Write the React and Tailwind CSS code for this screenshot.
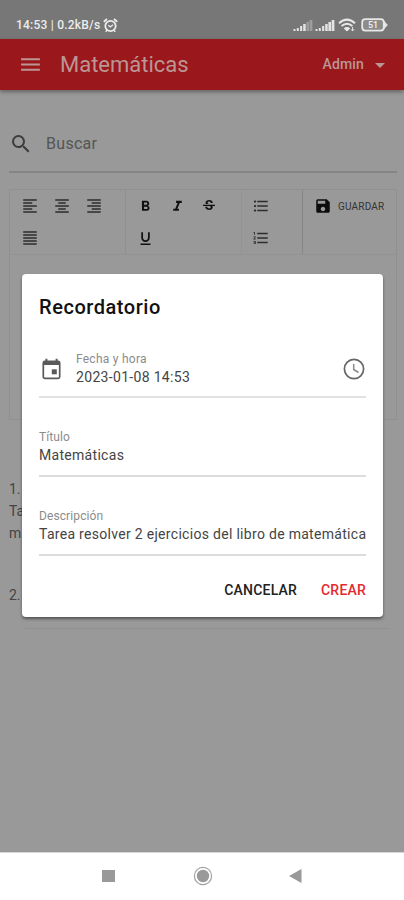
import {
  MdMenu, MdSearch, MdArrowDropDown, MdFormatAlignLeft, MdFormatAlignCenter,
  MdFormatAlignRight, MdFormatAlignJustify, MdFormatBold, MdFormatItalic,
  MdStrikethroughS, MdFormatUnderlined, MdFormatListBulleted,
  MdFormatListNumbered, MdSave,
} from "react-icons/md";

function Signal({ weak }) {
  return (
    <svg width="20" height="13" viewBox="0 0 20 13" fill="#e4e4e4">
      <rect x="0.5" y="10" width="2" height="2" />
      <rect x="3.8" y="9" width="2" height="3" />
      <rect x="7.1" y="7" width="2.1" height="5" />
      <rect x="10.2" y="5" width="2.5" height="7" />
      <rect x="13.4" y="3" width="2.6" height="9" opacity={weak ? 0.35 : 1} />
      <rect x="16.6" y="1" width="2.8" height="11" opacity={weak ? 0.35 : 1} />
    </svg>
  );
}

function StatusBar() {
  return (
    <div className="flex h-[39px] items-start justify-between bg-[#777777] pl-4 pr-4 pt-[17px] text-[#ececec]">
      <div className="flex h-4 items-center">
        <span className="text-[12px] font-medium leading-4 tracking-[0.22px] whitespace-nowrap">14:53 | 0.2kB/s</span>
        <svg className="ml-[3px]" width="15" height="15" viewBox="0 0 15 15" fill="none" stroke="#ececec" strokeWidth="1.8">
          <circle cx="7.5" cy="8" r="5.2" />
          <path d="M0.8 3.8 4 1M14.2 3.8 11 1" />
          <path d="M5.3 7.2 7.3 9l2.8-2.2" strokeWidth="1.3" />
          <path d="M4 12 2.8 13.8M11 12l1.2 1.8" strokeWidth="1.4" />
        </svg>
      </div>
      <div className="flex h-4 items-center">
        <Signal weak />
        <div className="ml-[2px]">
          <Signal />
        </div>
        <svg className="ml-[3px]" width="18" height="14" viewBox="0 0 18 14" fill="none" stroke="#e8e8e8" strokeWidth="2">
          <path d="M1 5.2Q9-2 17 5.2" />
          <path d="M3.6 8Q9 3.4 14.4 8" />
          <path d="M6.2 10.4Q9 8.2 11.8 10.4L9 13z" fill="#e8e8e8" strokeWidth="1" />
          <path d="M14.6 9v4M13.2 11.4 14.6 13l1.4-1.6" strokeWidth="1" />
        </svg>
        <svg className="ml-[5px]" width="27" height="14" viewBox="0 0 27 14">
          <rect x="1.2" y="1.2" width="21.6" height="11.4" rx="3" fill="#8c8c8c" stroke="#e6e6e6" strokeWidth="1.8" />
          <path d="M23 2.8 26.8 7 23 11.2z" fill="#e6e6e6" />
          <text x="12" y="10.2" textAnchor="middle" fill="#f0f0f0" className="text-[9px] font-medium">51</text>
        </svg>
      </div>
    </div>
  );
}

function Tool({ icon: Icon, size = 18 }) {
  return (
    <span className="flex h-8 w-8 items-center justify-center">
      <Icon size={size} />
    </span>
  );
}

function Toolbar() {
  return (
    <div className="flex h-[65px] border-b border-[#929292] text-[#2c2c2c]">
      <div className="flex w-[116px] flex-wrap content-start border-r border-[#909090] pl-[3.5px]">
        <Tool icon={MdFormatAlignLeft} />
        <Tool icon={MdFormatAlignCenter} />
        <Tool icon={MdFormatAlignRight} />
        <Tool icon={MdFormatAlignJustify} />
      </div>
      <div className="flex w-[116px] flex-wrap content-start border-r border-[#939393] pl-[3px] text-[#111111]">
        <Tool icon={MdFormatBold} size={17} />
        <Tool icon={MdFormatItalic} size={17} />
        <Tool icon={MdStrikethroughS} size={16} />
        <Tool icon={MdFormatUnderlined} size={17} />
      </div>
      <div className="flex w-[61px] flex-col items-start border-r border-[#868686] pl-[3px]">
        <Tool icon={MdFormatListBulleted} />
        <Tool icon={MdFormatListNumbered} />
      </div>
      <div className="flex h-8 items-center pl-[11px]">
        <MdSave size={18} className="text-[#0c0c0c]" />
        <span className="ml-1.5 text-[10px] tracking-[0.2px] text-[#333333]">GUARDAR</span>
      </div>
    </div>
  );
}

function Field({ label, value }) {
  return (
    <div className="mt-[31px] h-12 border-b-2 border-[#dcdcdc]">
      <div className="text-[12px] leading-4 tracking-[0.1px] text-[#8b8b8b]">{label}</div>
      <div className="text-[14px] leading-5 tracking-[0.3px] whitespace-nowrap text-[#444444]">{value}</div>
    </div>
  );
}

function ReminderDialog() {
  return (
    <div className="absolute left-[22px] top-[274px] h-[343px] w-[361px] rounded-[4px] bg-white px-[17px] pt-[19px] shadow-[0_2px_3px_rgba(0,0,0,0.45)]">
      <h2 className="text-[20px] font-medium leading-7 tracking-[0.55px] text-[#111111]">Recordatorio</h2>
      <div className="mt-[30px] flex h-[47px] items-start border-b-2 border-[#e2e2e2]">
        <svg className="ml-[3px] mt-[7px]" width="19" height="22" viewBox="0 0 19 22" fill="#5a5a5a">
          <rect x="1.3" y="3.3" width="16.4" height="17" rx="1.6" fill="none" stroke="#5a5a5a" strokeWidth="1.7" />
          <path d="M1 3h17v4H1zM3.4 0.8h2V4h-2zM13.6 0.8h2V4h-2z" />
          <rect x="9.8" y="11.3" width="5" height="5" />
        </svg>
        <div className="ml-[15px] flex-1">
          <div className="text-[12px] leading-4 tracking-[0.25px] text-[#8b8b8b]">Fecha y hora</div>
          <div className="text-[14px] leading-5 tracking-[0.32px] text-[#444444]">2023-01-08 14:53</div>
        </div>
        <svg className="mr-[1px] mt-[7px]" width="22" height="22" viewBox="0 0 22 22" fill="none" stroke="#666666" strokeWidth="1.7">
          <circle cx="11" cy="11" r="9.6" />
          <path d="M10.7 6v5.5l4.8 3" stroke="#888888" strokeWidth="1.5" />
        </svg>
      </div>
      <Field label="Título" value="Matemáticas" />
      <Field label="Descripción" value="Tarea resolver 2 ejercicios del libro de matemática" />
      <div className="mt-6 flex justify-end gap-6 text-[14px] font-medium leading-5 tracking-[0.2px]">
        <button className="text-[#222222]">CANCELAR</button>
        <button className="text-[#e52a2e]">CREAR</button>
      </div>
    </div>
  );
}

export default function App() {
  return (
    <div className="relative flex h-[900px] w-[404px] flex-col overflow-hidden bg-[#999999] font-['Roboto',sans-serif]">
      <StatusBar />
      <header className="flex h-[51px] shrink-0 items-center bg-[#9a171b] pl-[18px] pr-3 text-[#bb9694] shadow-[0_2px_4px_rgba(0,0,0,0.35)]">
        <MdMenu size={25} />
        <h1 className="ml-[17px] text-[22px] leading-7">Matemáticas</h1>
        <span className="ml-auto text-[14px] font-medium tracking-[0.15px]">Admin</span>
        <MdArrowDropDown size={24} className="ml-1" />
      </header>
      <main className="flex-1 pl-[9px] pr-[7px] pt-[30px]">
        <div className="flex h-[53px] items-start border-b-2 border-[#858585]">
          <MdSearch size={24} className="mt-3 text-[#3c3c3c]" />
          <span className="ml-[13px] mt-3 text-[16px] leading-6 tracking-[0.3px] text-[#555555]">Buscar</span>
        </div>
        <div className="mt-4 h-[231px] border border-[#909090]">
          <Toolbar />
        </div>
        <div className="pt-[58px] text-[14px] leading-[22px] text-[#444444]">
          <p>1.</p>
          <p>Ta</p>
          <p>m</p>
          <p className="mt-10">2.</p>
        </div>
        <div className="ml-4 mr-2 mt-[22px] border-b border-[#909090]" />
      </main>
      <nav className="flex h-12 shrink-0 items-center border-t border-[#d8d8d8] bg-white pb-px pl-[102px]">
        <span className="h-3 w-[13px] bg-[#999999]" />
        <svg className="ml-[78px]" width="20" height="20" viewBox="0 0 20 20">
          <circle cx="10" cy="10" r="8.6" fill="none" stroke="#a2a2a2" strokeWidth="1.2" />
          <circle cx="10" cy="10" r="6.2" fill="#999999" />
        </svg>
        <svg className="ml-[76px]" width="13" height="14" viewBox="0 0 13 14">
          <path d="M12.5 0v14L0 7z" fill="#999999" />
        </svg>
      </nav>
      <ReminderDialog />
    </div>
  );
}
